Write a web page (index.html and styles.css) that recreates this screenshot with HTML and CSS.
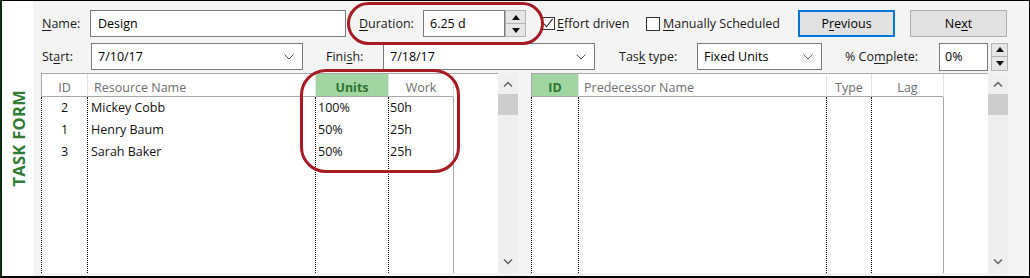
FILE: index.html
```html
<!DOCTYPE html>
<html>
<head>
<meta charset="utf-8">
<link rel="stylesheet" href="styles.css">
</head>
<body>
<div class="frame">
  <div class="side"><span class="side-title">TASK FORM</span></div>
  <div class="panel">
    <div class="row">
      <label class="lbl w-name"><u>N</u>ame:</label>
      <div class="field w-name-in">Design</div>
      <label class="lbl w-dur ml-dur"><u>D</u>uration:</label>
      <div class="field w-dur-in">6.25 d</div>
      <div class="spin spin-dur">
        <div class="spin-btn"><svg width="8" height="5" viewBox="0 0 8 5"><path d="M0 5 L4 0 L8 5 Z" fill="#111"/></svg></div>
        <div class="spin-btn"><svg width="8" height="5" viewBox="0 0 8 5"><path d="M0 0 L4 5 L8 0 Z" fill="#111"/></svg></div>
      </div>
      <div class="check w-cb1">
        <span class="box"><svg width="13" height="13" viewBox="0 0 13 13"><path d="M2 6.5 L5 10 L11.5 1.5" fill="none" stroke="#222" stroke-width="1.2"/></svg></span>
        <span><u>E</u>ffort driven</span>
      </div>
      <div class="check w-cb2">
        <span class="box"></span>
        <span><u>M</u>anually Scheduled</span>
      </div>
      <div class="btn btn-primary">P<u>r</u>evious</div>
      <div class="btn btn-next">Ne<u>x</u>t</div>
    </div>
    <div class="row row2">
      <label class="lbl w-start">St<u>a</u>rt:</label>
      <div class="field select w-date">7/10/17<svg class="chev" width="10" height="6" viewBox="0 0 10 6"><path d="M0.5 0.5 L5 5 L9.5 0.5" fill="none" stroke="#555" stroke-width="1"/></svg></div>
      <label class="lbl w-finish">Fini<u>s</u>h:</label>
      <div class="field select w-date">7/18/17<svg class="chev" width="10" height="6" viewBox="0 0 10 6"><path d="M0.5 0.5 L5 5 L9.5 0.5" fill="none" stroke="#555" stroke-width="1"/></svg></div>
      <label class="lbl w-tt">Tas<u>k</u> type:</label>
      <div class="field select w-type">Fixed Units<svg class="chev" width="10" height="6" viewBox="0 0 10 6"><path d="M0.5 0.5 L5 5 L9.5 0.5" fill="none" stroke="#555" stroke-width="1"/></svg></div>
      <label class="lbl w-pc">% Co<u>m</u>plete:</label>
      <div class="field w-pc-in">0%</div>
      <div class="spin spin-pc">
        <div class="spin-btn"><svg width="8" height="5" viewBox="0 0 8 5"><path d="M0 5 L4 0 L8 5 Z" fill="#111"/></svg></div>
        <div class="spin-btn"><svg width="8" height="5" viewBox="0 0 8 5"><path d="M0 0 L4 5 L8 0 Z" fill="#111"/></svg></div>
      </div>
    </div>
    <div class="tables">
      <div class="grid grid-res">
        <div class="hd hd-first c">ID</div>
        <div class="hd">Resource Name</div>
        <div class="hd hd-sel c">Units</div>
        <div class="hd c">Work</div>
        <div class="hd hd-fill"></div>
        <div class="scroll">
          <svg class="sc-arrow" width="10" height="6" viewBox="0 0 10 6"><path d="M1 5.5 L5 1.5 L9 5.5" fill="none" stroke="#606060" stroke-width="1.5"/></svg>
          <div class="thumb"></div>
          <div class="sc-space"></div>
          <svg class="sc-arrow" width="10" height="6" viewBox="0 0 10 6"><path d="M1 0.5 L5 4.5 L9 0.5" fill="none" stroke="#606060" stroke-width="1.5"/></svg>
        </div>
        <div class="col col-first c"><div class="cell">2</div><div class="cell">1</div><div class="cell">3</div></div>
        <div class="col"><div class="cell p4">Mickey Cobb</div><div class="cell p4">Henry Baum</div><div class="cell p4">Sarah Baker</div></div>
        <div class="col"><div class="cell p3">100%</div><div class="cell p3">50%</div><div class="cell p3">50%</div></div>
        <div class="col"><div class="cell p2">50h</div><div class="cell p2">25h</div><div class="cell p2">25h</div></div>
        <div class="col col-fill"></div>
      </div>
      <div class="grid grid-pred">
        <div class="hd hd-first hd-sel c">ID</div>
        <div class="hd hd-name">Predecessor Name</div>
        <div class="hd c">Type</div>
        <div class="hd c">Lag</div>
        <div class="hd hd-fill"></div>
        <div class="scroll">
          <svg class="sc-arrow" width="10" height="6" viewBox="0 0 10 6"><path d="M1 5.5 L5 1.5 L9 5.5" fill="none" stroke="#606060" stroke-width="1.5"/></svg>
          <div class="thumb"></div>
          <div class="sc-space"></div>
          <svg class="sc-arrow" width="10" height="6" viewBox="0 0 10 6"><path d="M1 0.5 L5 4.5 L9 0.5" fill="none" stroke="#606060" stroke-width="1.5"/></svg>
        </div>
        <div class="col col-first"></div>
        <div class="col"></div>
        <div class="col"></div>
        <div class="col"></div>
        <div class="col col-fill"></div>
      </div>
    </div>
  </div>
  <div class="mark mark-dur"></div>
  <div class="mark mark-units"></div>
</div>
</body>
</html>
```
FILE: styles.css
```css
* { box-sizing: border-box; }
html, body { margin: 0; padding: 0; background: #fff; }
body {
  font-family: "Open Sans", "Noto Sans", sans-serif;
  font-size: 12.5px;
  color: #1a1a1a;
}
u { text-decoration: underline; text-underline-offset: 2px; }
.frame {
  position: relative;
  width: 1030px;
  height: 278px;
  border-top: 1px solid #000;
  border-left: 2px solid #0e2a10;
  border-right: 1px solid #000;
  border-bottom: 2px solid #000;
  display: flex;
}
.side {
  width: 31px;
  background: #fff;
  display: flex;
  align-items: center;
  justify-content: center;
}
.side-title {
  writing-mode: vertical-rl;
  transform: rotate(180deg);
  font-weight: 700;
  font-size: 16.5px;
  letter-spacing: 0.3px;
  color: #2f7d34;
  margin-left: 1px;
}
.panel {
  flex: 1;
  background: #f4f4f4;
  padding: 9px 0 0 9px;
  display: flex;
  flex-direction: column;
}
.row { display: flex; align-items: center; height: 27px; }
.row2 { margin-top: 6px; }
.lbl { flex: none; white-space: nowrap; }
.field {
  flex: none;
  height: 27px;
  background: #fff;
  border: 1px solid #7a7a7a;
  padding: 0 6px;
  display: flex;
  align-items: center;
  color: #000;
  white-space: nowrap;
}
.select { justify-content: space-between; padding-right: 8px; }
.chev { flex: none; margin-top: 1px; }
.w-name { width: 48px; }
.w-name-in { width: 256px; padding-left: 7px; }
.ml-dur { margin-left: 13px; }
.w-dur { width: 64px; }
.w-dur-in { width: 82px; }
.spin {
  flex: none;
  display: flex;
  flex-direction: column;
  height: 27px;
}
.spin-dur { width: 21px; }
.spin-pc { width: 17px; margin-left: 3px; height: 28px; }
.spin-btn {
  flex: 1;
  background: #e6e6e6;
  border: 1px solid #b4b4b4;
  display: flex;
  align-items: center;
  justify-content: center;
}
.spin-btn + .spin-btn { border-top: none; }
.check { flex: none; display: flex; align-items: center; white-space: nowrap; }
.w-cb1 { width: 104px; margin-left: 16px; }
.w-cb2 { width: 152px; }
.box {
  flex: none;
  width: 14px;
  height: 14px;
  border: 1px solid #333;
  background: #fff;
  margin-right: 3px;
  display: flex;
}
.box svg { margin: -1px 0 0 -1px; }
.w-cb1 .box { width: 13px; height: 13px; margin-right: 2px; }
.btn {
  flex: none;
  width: 97px;
  height: 27px;
  background: #e1e1e1;
  border: 1px solid #adadad;
  display: flex;
  align-items: center;
  justify-content: center;
  color: #000;
}
.btn-primary { border: 2px solid #0078d7; }
.btn-next { margin-left: 15px; }
.w-start { width: 49px; }
.w-date { width: 212px; }
.w-finish { width: 57px; margin-left: 23px; }
.w-tt { width: 78px; margin-left: 24px; }
.w-type { width: 125px; }
.w-pc { width: 94px; margin-left: 23px; }
.w-pc-in { width: 49px; height: 28px; padding-left: 5px; }

.tables {
  display: flex;
  gap: 13px;
  margin-top: 3px;
  margin-left: -1px;
}
.grid {
  display: grid;
  grid-template-rows: 23px 176px;
  background: #fff;
  border-top: 1px solid #a8a8a8;
}
.grid-res { grid-template-columns: 46px 228px 73px 65px 45px 20px; }
.grid-pred { grid-template-columns: 47px 248px 45px 72px 45px 20px; }
.hd {
  border-bottom: 1px solid #a8a8a8;
  border-left: 1px solid #e4e4e4;
  color: #6e6e6e;
  padding: 5px 0 0 6px;
  white-space: nowrap;
}
.hd.c { text-align: center; padding-left: 0; }
.hd-first { border-left: 1px solid #a8a8a8; }
.hd-sel { background: #a1d6a2; color: #2d7431; font-weight: 700; }
.hd-name { padding-left: 5px; }
.hd-fill { border-bottom: none; }
.scroll {
  grid-row: 1 / span 2;
  grid-column: 6;
  background: #efefef;
  display: flex;
  flex-direction: column;
  align-items: center;
  margin-top: -1px;
}
.sc-arrow { flex: none; margin-top: 8px; }
.thumb { width: 20px; height: 21px; background: #cdcdcd; margin-top: 7px; flex: none; }
.sc-space { flex: 1; }
.scroll .sc-arrow:last-child { margin: 0 0 8px 0; }
.col { border-left: 1px dotted #000; }
.col-fill { border-left: 1px solid #a8a8a8; }
.cell { height: 22px; line-height: 22px; color: #111; white-space: nowrap; }
.col.c .cell { text-align: center; }
.p4 { padding-left: 3px; }
.p3 { padding-left: 2px; }
.p2 { padding-left: 1px; }

.mark {
  position: absolute;
  border: 3px solid #a51c24;
  pointer-events: none;
}
.mark-dur { left: 345px; top: 1px; width: 197px; height: 43px; border-radius: 22px; }
.mark-units { left: 298px; top: 68px; width: 160px; height: 104px; border-radius: 26px; }
```
